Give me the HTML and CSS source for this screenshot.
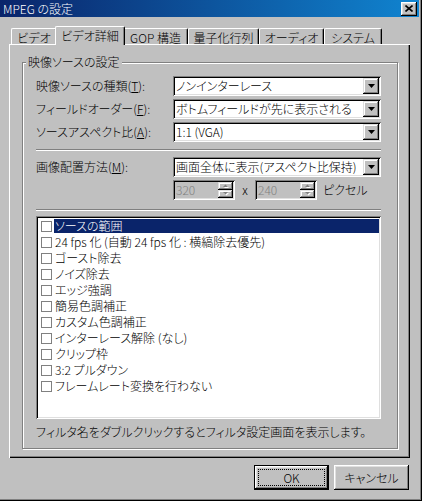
FILE: index.html
```html
<!DOCTYPE html>
<html lang="ja">
<head>
<meta charset="utf-8">
<title>MPEG の設定</title>
<link rel="stylesheet" href="styles.css">
</head>
<body>
<div class="window">
  <div class="titlebar">
    <span class="title">MPEG の設定</span>
    <span class="close"><svg width="8" height="7" viewBox="0 0 8 7"><path d="M0.5 0.5 L7.5 6.5 M7.5 0.5 L0.5 6.5" stroke="#000" stroke-width="1.6" fill="none"/></svg></span>
  </div>
  <div class="content">
    <div class="tabs">
      <div class="tab t1">ビデオ</div>
      <div class="tab t2 sel">ビデオ詳細</div>
      <div class="tab t3">GOP 構造</div>
      <div class="tab t4">量子化行列</div>
      <div class="tab t5">オーディオ</div>
      <div class="tab t6">システム</div>
    </div>
    <div class="panel">
      <fieldset class="group">
        <legend>映像ソースの設定</legend>
        <div class="gbody">
          <div class="row">
            <span class="lab">映像ソースの種類(<u>T</u>):</span>
            <div class="combo"><span class="val">ノンインターレース</span><span class="drop"><svg width="7" height="4" viewBox="0 0 7 4"><path d="M0 0 H7 L3.5 4 Z" fill="#000"/></svg></span></div>
          </div>
          <div class="row">
            <span class="lab">フィールドオーダー(<u>F</u>):</span>
            <div class="combo"><span class="val">ボトムフィールドが先に表示される</span><span class="drop"><svg width="7" height="4" viewBox="0 0 7 4"><path d="M0 0 H7 L3.5 4 Z" fill="#000"/></svg></span></div>
          </div>
          <div class="row">
            <span class="lab">ソースアスペクト比(<u>A</u>):</span>
            <div class="combo"><span class="val">1:1 (VGA)</span><span class="drop"><svg width="7" height="4" viewBox="0 0 7 4"><path d="M0 0 H7 L3.5 4 Z" fill="#000"/></svg></span></div>
          </div>
          <div class="sep"></div>
          <div class="row">
            <span class="lab">画像配置方法(<u>M</u>):</span>
            <div class="combo"><span class="val">画面全体に表示(アスペクト比保持)</span><span class="drop"><svg width="7" height="4" viewBox="0 0 7 4"><path d="M0 0 H7 L3.5 4 Z" fill="#000"/></svg></span></div>
          </div>
          <div class="spinrow">
            <div class="spin">
              <span class="num">320</span>
              <span class="arrows">
                <span class="half"><svg width="6" height="4" viewBox="0 0 6 4"><path d="M1 4 H6 L3.5 1.5 Z" fill="#fff"/><path d="M0 3 H5 L2.5 0.5 Z" fill="#808080"/></svg></span>
                <span class="half"><svg width="6" height="4" viewBox="0 0 6 4"><path d="M1 1 H6 L3.5 3.5 Z" fill="#fff"/><path d="M0 0 H5 L2.5 2.5 Z" fill="#808080"/></svg></span>
              </span>
            </div>
            <span class="times">x</span>
            <div class="spin">
              <span class="num">240</span>
              <span class="arrows">
                <span class="half"><svg width="6" height="4" viewBox="0 0 6 4"><path d="M1 4 H6 L3.5 1.5 Z" fill="#fff"/><path d="M0 3 H5 L2.5 0.5 Z" fill="#808080"/></svg></span>
                <span class="half"><svg width="6" height="4" viewBox="0 0 6 4"><path d="M1 1 H6 L3.5 3.5 Z" fill="#fff"/><path d="M0 0 H5 L2.5 2.5 Z" fill="#808080"/></svg></span>
              </span>
            </div>
            <span class="unit">ピクセル</span>
          </div>
          <div class="sep sep2"></div>
          <div class="list">
            <div class="item selected"><span class="cb"></span><span class="lbl">ソースの範囲</span></div>
            <div class="item"><span class="cb"></span><span class="lbl">24 fps 化 (自動 24 fps 化 : 横縞除去優先)</span></div>
            <div class="item"><span class="cb"></span><span class="lbl">ゴースト除去</span></div>
            <div class="item"><span class="cb"></span><span class="lbl">ノイズ除去</span></div>
            <div class="item"><span class="cb"></span><span class="lbl">エッジ強調</span></div>
            <div class="item"><span class="cb"></span><span class="lbl">簡易色調補正</span></div>
            <div class="item"><span class="cb"></span><span class="lbl">カスタム色調補正</span></div>
            <div class="item"><span class="cb"></span><span class="lbl">インターレース解除 (なし)</span></div>
            <div class="item"><span class="cb"></span><span class="lbl">クリップ枠</span></div>
            <div class="item"><span class="cb"></span><span class="lbl">3:2 プルダウン</span></div>
            <div class="item"><span class="cb"></span><span class="lbl">フレームレート変換を行わない</span></div>
          </div>
          <div class="hint">フィルタ名をダブルクリックするとフィルタ設定画面を表示します。</div>
        </div>
      </fieldset>
    </div>
    <div class="buttons">
      <button class="btn default"><span class="focus">OK</span></button>
      <button class="btn"><span class="plain">キャンセル</span></button>
    </div>
  </div>
</div>
</body>
</html>
```

FILE: styles.css
```css
* { box-sizing: border-box; }
html, body { margin: 0; padding: 0; }
body {
  width: 422px;
  height: 501px;
  overflow: hidden;
  background: #c0c0c0;
  font-family: "Noto Sans CJK JP", "Liberation Sans", sans-serif;
  font-size: 12px;
  font-weight: 300;
  line-height: 14px;
  color: #000;
  font-feature-settings: "palt";
}
.window {
  width: 422px;
  height: 501px;
  display: flex;
  flex-direction: column;
  box-shadow: inset -1px -1px 0 #000, inset -2px -2px 0 #808080;
}
.titlebar {
  height: 17px;
  margin-right: 3px;
  background: linear-gradient(90deg, #0a246a, #1084d0);
  display: flex;
  align-items: center;
  justify-content: space-between;
  padding: 0 2px 0 3px;
  color: #fff;
}
.title { white-space: nowrap; }
.close {
  width: 16px;
  height: 14px;
  background: #c0c0c0;
  display: flex;
  align-items: center;
  justify-content: center;
  box-shadow: inset -1px -1px 0 #000, inset 1px 1px 0 #fff, inset -2px -2px 0 #808080, inset 2px 2px 0 #dfdfdf;
}
.close svg { display: block; }
.content {
  flex: 1;
  display: flex;
  flex-direction: column;
  padding: 9px 12px 0 9px;
}
.tabs {
  display: flex;
  align-items: flex-end;
  height: 18px;
  padding-left: 2px;
}
.tab {
  flex: none;
  height: 16px;
  background: #c0c0c0;
  border-top: 1px solid #fff;
  border-left: 1px solid #fff;
  border-right: 1px solid #000;
  border-radius: 2px 2px 0 0;
  box-shadow: inset -1px 0 0 #808080;
  padding-top: 2px;
  text-align: center;
  white-space: nowrap;
}
.tab.sel {
  height: 19px;
  margin: 0 -2px -1px;
  padding-top: 2px;
  position: relative;
  z-index: 1;
}
.t1 { width: 46px; }
.t2 { width: 70px; }
.t3 { width: 65px; }
.t4 { width: 71px; }
.t5 { width: 65px; }
.t6 { width: 58px; }
.panel {
  height: 414px;
  border-top: 1px solid #fff;
  border-left: 1px solid #fff;
  box-shadow: inset -1px -1px 0 #000, inset -2px -2px 0 #808080;
  padding: 10px 12px 9px 12px;
  display: flex;
  flex-direction: column;
}
.group {
  flex: 1;
  margin: 0;
  padding: 0;
  min-width: 0;
  border: 1px solid #808080;
  box-shadow: inset 1px 1px 0 #fff, 1px 1px 0 #fff;
}
.group legend {
  margin-left: 3px;
  padding: 0 2px;
  line-height: 14px;
  background: #c0c0c0;
}
.gbody {
  padding: 7px 16px 0 13px;
}
.row {
  display: flex;
  align-items: center;
  height: 20px;
}
.row + .row { margin-top: 3px; }
.lab {
  width: 137px;
  flex: none;
  white-space: nowrap;
}
.combo {
  flex: 1;
  height: 20px;
  background: #fff;
  padding: 2px;
  display: flex;
  align-items: center;
  box-shadow: inset 1px 1px 0 #808080, inset -1px -1px 0 #fff, inset 2px 2px 0 #000, inset -2px -2px 0 #dfdfdf;
}
.combo .val {
  flex: 1;
  min-width: 0;
  padding-left: 1px;
  line-height: 16px;
  white-space: nowrap;
}
.drop {
  width: 16px;
  height: 16px;
  flex: none;
  background: #c0c0c0;
  display: flex;
  align-items: center;
  justify-content: center;
  box-shadow: inset -1px -1px 0 #000, inset 1px 1px 0 #dfdfdf, inset -2px -2px 0 #808080, inset 2px 2px 0 #fff;
}
.drop svg, .half svg { display: block; }
.sep {
  height: 2px;
  border-top: 1px solid #808080;
  border-bottom: 1px solid #fff;
  margin: 7px 0 6px;
}
.sep2 { margin: 9px 0 5px; }
.spinrow {
  display: flex;
  align-items: center;
  height: 20px;
  margin-top: 3px;
  padding-left: 137px;
}
.spin {
  width: 62px;
  height: 20px;
  display: flex;
  padding: 2px;
  box-shadow: inset 1px 1px 0 #808080, inset -1px -1px 0 #fff, inset 2px 2px 0 #000, inset -2px -2px 0 #dfdfdf;
}
.spin .num {
  flex: 1;
  color: #808080;
  padding-left: 1px;
  line-height: 16px;
}
.arrows {
  width: 15px;
  display: flex;
  flex-direction: column;
}
.half {
  flex: 1;
  display: flex;
  align-items: center;
  justify-content: center;
  background: #c0c0c0;
  box-shadow: inset -1px -1px 0 #000, inset 1px 1px 0 #dfdfdf, inset -2px -2px 0 #808080, inset 2px 2px 0 #fff;
}
.times {
  width: 20px;
  text-align: center;
}
.unit { margin-left: 6px; }
.list {
  height: 203px;
  background: #fff;
  padding: 2px;
  box-shadow: inset 1px 1px 0 #808080, inset -1px -1px 0 #fff, inset 2px 2px 0 #000, inset -2px -2px 0 #dfdfdf;
}
.item {
  height: 16px;
  display: flex;
  align-items: center;
  padding-left: 3px;
}
.cb {
  width: 11px;
  height: 11px;
  flex: none;
  border: 1px solid #808080;
  background: #fff;
  margin-right: 2px;
}
.lbl {
  flex: 1;
  height: 14px;
  padding-left: 1px;
  white-space: nowrap;
}
.item.selected .lbl {
  background: #0a246a;
  color: #fff;
}
.hint {
  margin-top: 6px;
  white-space: nowrap;
}
.buttons {
  display: flex;
  justify-content: flex-end;
  gap: 5px;
  margin-top: 7px;
  padding-right: 1px;
}
.btn {
  width: 75px;
  height: 25px;
  padding: 0;
  border: none;
  background: #c0c0c0;
  font: inherit;
  color: #000;
  display: flex;
  box-shadow: inset -1px -1px 0 #000, inset 1px 1px 0 #fff, inset -2px -2px 0 #808080, inset 2px 2px 0 #dfdfdf;
}
.btn.default {
  box-shadow: inset 0 0 0 1px #000, inset -2px -2px 0 #000, inset 2px 2px 0 #fff, inset -3px -3px 0 #808080, inset 3px 3px 0 #dfdfdf;
}
.focus, .plain {
  flex: 1;
  display: flex;
  align-items: center;
  justify-content: center;
}
.focus {
  margin: 4px;
  border: 1px dotted #000;
}
```
